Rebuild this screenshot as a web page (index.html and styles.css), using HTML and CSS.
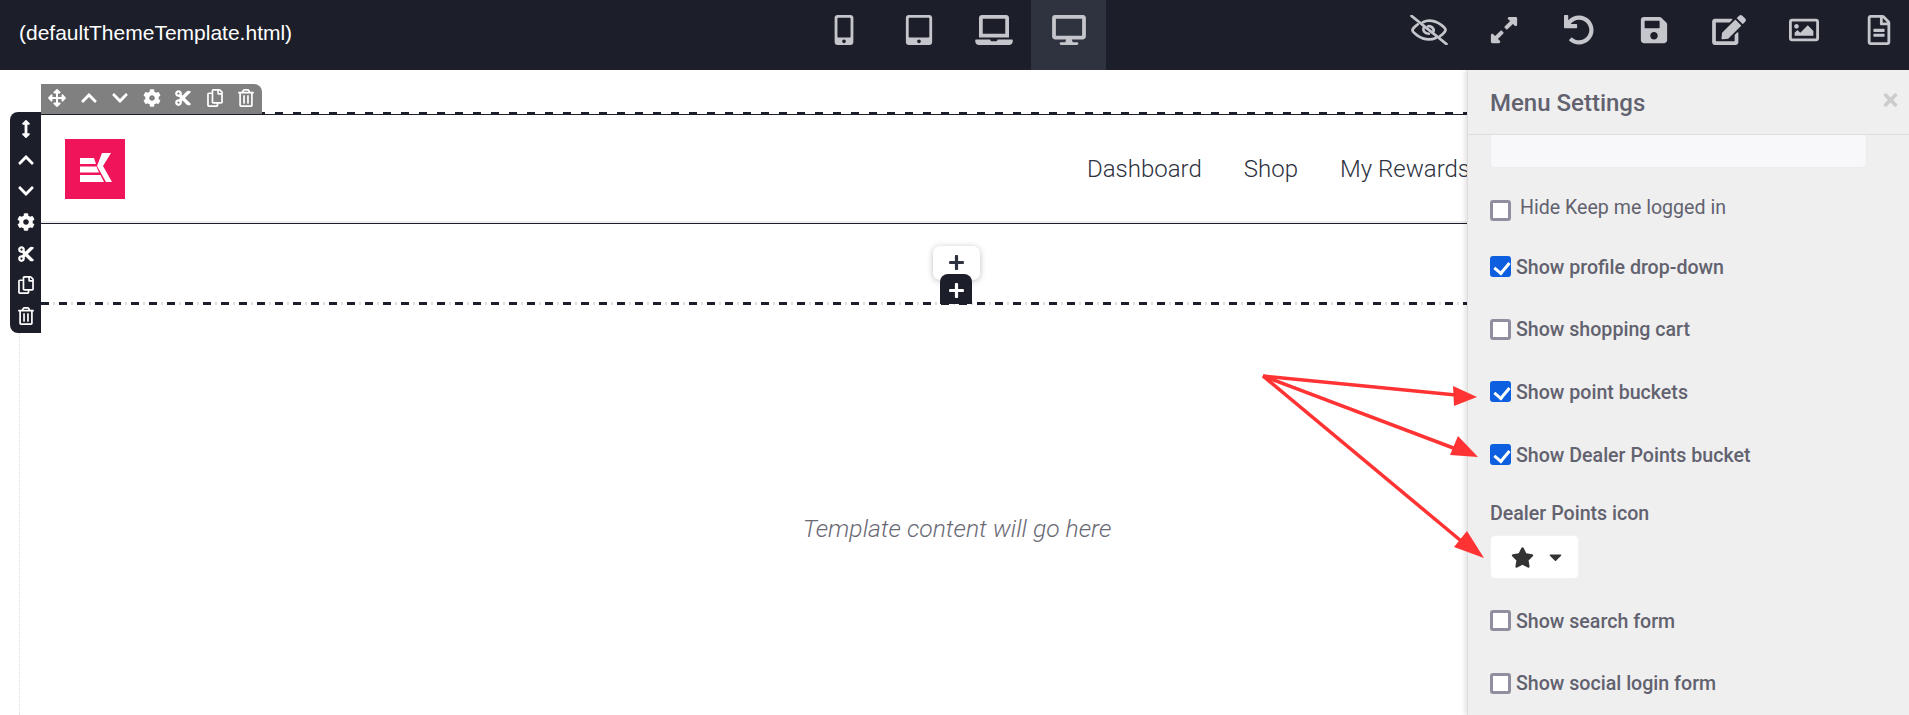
FILE: index.html
```html
<!DOCTYPE html>
<html lang="en">
<head>
    <meta charset="UTF-8">
    <title>Template Editor</title>
    <link rel="stylesheet" href="styles.css">
</head>
<body>
    <!-- Icon sprite -->
    <svg class="sprite" xmlns="http://www.w3.org/2000/svg">
        <symbol id="i-mobile" viewBox="0 0 320 512"><path d="M272 0H48C21.5 0 0 21.5 0 48v416c0 26.5 21.5 48 48 48h224c26.5 0 48-21.5 48-48V48c0-26.5-21.5-48-48-48zM160 480c-17.7 0-32-14.3-32-32s14.3-32 32-32 32 14.3 32 32-14.3 32-32 32zm112-108c0 6.6-5.4 12-12 12H60c-6.6 0-12-5.4-12-12V60c0-6.6 5.4-12 12-12h200c6.6 0 12 5.4 12 12v312z"/></symbol>
        <symbol id="i-tablet" viewBox="0 0 448 512"><path d="M400 0H48C21.5 0 0 21.5 0 48v416c0 26.5 21.5 48 48 48h352c26.5 0 48-21.5 48-48V48c0-26.5-21.5-48-48-48zM224 480c-17.7 0-32-14.3-32-32s14.3-32 32-32 32 14.3 32 32-14.3 32-32 32zm176-108c0 6.6-5.4 12-12 12H60c-6.6 0-12-5.4-12-12V60c0-6.6 5.4-12 12-12h328c6.6 0 12 5.4 12 12v312z"/></symbol>
        <symbol id="i-laptop" viewBox="0 0 640 512"><path d="M624 416H381.54c-.74 19.81-14.71 32-32.74 32H288c-18.69 0-33.02-17.47-32.77-32H16c-8.8 0-16 7.2-16 16v16c0 35.2 28.8 64 64 64h512c35.2 0 64-28.8 64-64v-16c0-8.8-7.2-16-16-16zM576 48c0-26.4-21.6-48-48-48H112C85.6 0 64 21.6 64 48v336h512V48zm-64 272H128V64h384v256z"/></symbol>
        <symbol id="i-desktop" viewBox="0 0 576 512"><path d="M528 0H48C21.5 0 0 21.5 0 48v320c0 26.5 21.5 48 48 48h192l-16 48h-72c-13.3 0-24 10.7-24 24s10.7 24 24 24h272c13.3 0 24-10.7 24-24s-10.7-24-24-24h-72l-16-48h192c26.5 0 48-21.5 48-48V48c0-26.5-21.5-48-48-48zm-16 352H64V64h448v288z"/></symbol>
        <symbol id="i-eye-off" viewBox="0 0 640 512"><g fill="none" stroke="currentColor" stroke-width="46" stroke-linecap="round"><path d="M128 160C60 205 38 250 38 256c0 30 120 160 282 160 45 0 82-9 115-24"/><path d="M215 122c32-14 67-26 105-26 162 0 282 130 282 160 0 8-26 58-94 104"/><path d="M228 220c-14 38 4 92 92 100"/><path d="M306 192c50-8 100 30 92 86"/><path d="M22 16l596 480"/></g></symbol>
        <symbol id="i-expand" viewBox="0 0 448 512"><path d="M212.686 315.314L120 408l32.922 31.029c15.12 15.12 4.412 40.971-16.97 40.971h-112C10.697 480 0 469.255 0 456V344c0-21.382 25.803-32.09 40.922-16.971L72 360l92.686-92.686c6.249-6.248 16.379-6.248 22.627 0l25.373 25.373c6.249 6.248 6.249 16.378 0 22.627zm22.628-118.628L328 104l-32.922-31.029C279.958 57.851 290.666 32 312.048 32h112C437.303 32 448 42.745 448 56v112c0 21.382-25.803 32.09-40.922 16.971L376 152l-92.686 92.686c-6.248 6.248-16.379 6.248-22.627 0l-25.373-25.373c-6.249-6.248-6.249-16.378 0-22.627z"/></symbol>
        <symbol id="i-undo" viewBox="0 0 512 512"><path d="M212.333 224.333H12c-6.627 0-12-5.373-12-12V12C0 5.373 5.373 0 12 0h48c6.627 0 12 5.373 12 12v78.112C117.773 39.279 184.26 7.47 258.175 8.007c136.906.994 246.448 111.623 246.157 248.532C504.041 393.258 393.12 504 256.333 504c-64.089 0-122.496-24.313-166.51-64.215-5.099-4.622-5.334-12.554-.467-17.42l33.967-33.967c4.474-4.474 11.662-4.717 16.401-.525C170.76 415.336 211.58 432 256.333 432c97.268 0 176-78.716 176-176 0-97.267-78.716-176-176-176-58.496 0-110.28 28.476-142.274 72.333h98.274c6.627 0 12 5.373 12 12v48c0 6.627-5.373 12-12 12z"/></symbol>
        <symbol id="i-save" viewBox="0 0 448 512"><path d="M433.941 129.941l-83.882-83.882A48 48 0 0 0 316.118 32H48C21.49 32 0 53.49 0 80v352c0 26.51 21.49 48 48 48h352c26.51 0 48-21.49 48-48V163.882a48 48 0 0 0-14.059-33.941zM224 416c-35.346 0-64-28.654-64-64 0-35.346 28.654-64 64-64s64 28.654 64 64c0 35.346-28.654 64-64 64zm96-304.52V212c0 6.627-5.373 12-12 12H76c-6.627 0-12-5.373-12-12V108c0-6.627 5.373-12 12-12h228.52c3.183 0 6.235 1.264 8.485 3.515l3.48 3.48A11.996 11.996 0 0 1 320 111.48z"/></symbol>
        <symbol id="i-edit" viewBox="0 0 576 512"><path d="M402.6 83.2l90.2 90.2c3.8 3.8 3.8 10 0 13.8L274.4 405.6l-92.8 10.3c-12.4 1.4-22.9-9.1-21.5-21.5l10.3-92.8L388.8 83.2c3.8-3.8 10-3.8 13.8 0zm162-22.9l-48.8-48.8c-15.2-15.2-39.9-15.2-55.2 0l-35.4 35.4c-3.8 3.8-3.8 10 0 13.8l90.2 90.2c3.8 3.8 10 3.8 13.8 0l35.4-35.4c15.2-15.3 15.2-40 0-55.2zM384 346.2V448H64V128h229.8c3.2 0 6.2-1.3 8.5-3.5l40-40c7.6-7.6 2.2-20.5-8.5-20.5H48C21.5 64 0 85.5 0 112v352c0 26.5 21.5 48 48 48h352c26.5 0 48-21.5 48-48V306.2c0-10.7-12.9-16-20.5-8.5l-40 40c-2.2 2.3-3.5 5.3-3.5 8.5z"/></symbol>
        <symbol id="i-image" viewBox="0 0 512 512"><path d="M464 64H48C21.49 64 0 85.49 0 112v288c0 26.51 21.49 48 48 48h416c26.51 0 48-21.49 48-48V112c0-26.51-21.49-48-48-48zm-6 336H54a6 6 0 0 1-6-6V118a6 6 0 0 1 6-6h404a6 6 0 0 1 6 6v276a6 6 0 0 1-6 6zM128 152c-22.091 0-40 17.909-40 40s17.909 40 40 40 40-17.909 40-40-17.909-40-40-40zM96 352h320v-80l-87.515-87.515c-4.686-4.686-12.284-4.686-16.971 0L192 304l-39.515-39.515c-4.686-4.686-12.284-4.686-16.971 0L96 304v48z"/></symbol>
        <symbol id="i-file" viewBox="0 0 384 512"><path d="M288 248v28c0 6.6-5.4 12-12 12H108c-6.6 0-12-5.4-12-12v-28c0-6.6 5.4-12 12-12h168c6.6 0 12 5.4 12 12zm-12 72H108c-6.6 0-12 5.4-12 12v28c0 6.6 5.4 12 12 12h168c6.6 0 12-5.4 12-12v-28c0-6.6-5.4-12-12-12zm108-188.1V464c0 26.5-21.5 48-48 48H48c-26.5 0-48-21.5-48-48V48C0 21.5 21.5 0 48 0h204.1C264.8 0 277 5.1 286 14.1L369.9 98c9 8.9 14.1 21.2 14.1 33.9zm-128-80V128h76.1L256 51.9zM336 464V176H232c-13.3 0-24-10.7-24-24V48H48v416h288z"/></symbol>
        <symbol id="i-move" viewBox="0 0 512 512"><path d="M352.201 425.775l-79.196 79.196c-9.373 9.373-24.568 9.373-33.941 0l-79.196-79.196c-15.119-15.119-4.411-40.971 16.971-40.97h51.162L228 284H127.196v51.162c0 21.382-25.851 32.09-40.971 16.971L7.029 272.937c-9.373-9.373-9.373-24.569 0-33.941L86.225 159.8c15.119-15.119 40.971-4.411 40.971 16.971V228H228V127.196h-51.23c-21.382 0-32.09-25.851-16.971-40.971l79.196-79.196c9.373-9.373 24.568-9.373 33.941 0l79.196 79.196c15.119 15.119 4.411 40.971-16.971 40.971h-51.162V228h100.804v-51.162c0-21.382 25.851-32.09 40.97-16.971l79.196 79.196c9.373 9.373 9.373 24.569 0 33.941L425.773 352.2c-15.119 15.119-40.971 4.411-40.97-16.971V284H284v100.804h51.23c21.382 0 32.09 25.851 16.971 40.971z"/></symbol>
        <symbol id="i-up" viewBox="0 0 448 512"><path d="M240.971 130.524l194.343 194.343c9.373 9.373 9.373 24.569 0 33.941l-22.667 22.667c-9.357 9.357-24.522 9.375-33.901.04L224 227.495 69.255 381.516c-9.379 9.335-24.544 9.317-33.901-.04l-22.667-22.667c-9.373-9.373-9.373-24.569 0-33.941L207.03 130.525c9.372-9.373 24.568-9.373 33.941-.001z"/></symbol>
        <symbol id="i-down" viewBox="0 0 448 512"><path d="M207.029 381.476L12.686 187.132c-9.373-9.373-9.373-24.569 0-33.941l22.667-22.667c9.357-9.357 24.522-9.375 33.901-.04L224 284.505l154.745-154.021c9.379-9.335 24.544-9.317 33.901.04l22.667 22.667c9.373 9.373 9.373 24.569 0 33.941L240.971 381.476c-9.373 9.372-24.569 9.372-33.942 0z"/></symbol>
        <symbol id="i-cog" viewBox="0 0 512 512"><path d="M487.4 315.7l-42.6-24.6c4.3-23.2 4.3-47 0-70.2l42.6-24.6c4.9-2.8 7.1-8.6 5.5-14-11.1-35.6-30-67.8-54.7-94.6-3.8-4.1-10-5.1-14.8-2.3L380.8 110c-17.9-15.4-38.5-27.3-60.8-35.1V25.8c0-5.6-3.9-10.5-9.4-11.7-36.7-8.2-74.3-7.8-109.2 0-5.5 1.2-9.4 6.1-9.4 11.7V75c-22.2 7.9-42.8 19.8-60.8 35.1L88.7 85.5c-4.9-2.8-11-1.9-14.8 2.3-24.7 26.7-43.6 58.9-54.7 94.6-1.7 5.4.6 11.2 5.5 14L67.3 221c-4.3 23.2-4.3 47 0 70.2l-42.6 24.6c-4.9 2.8-7.1 8.6-5.5 14 11.1 35.6 30 67.8 54.7 94.6 3.8 4.1 10 5.1 14.8 2.3l42.6-24.6c17.9 15.4 38.5 27.3 60.8 35.1v49.2c0 5.6 3.9 10.5 9.4 11.7 36.7 8.2 74.3 7.8 109.2 0 5.5-1.2 9.4-6.1 9.4-11.7v-49.2c22.2-7.9 42.8-19.8 60.8-35.1l42.6 24.6c4.9 2.8 11 1.9 14.8-2.3 24.7-26.7 43.6-58.9 54.7-94.6 1.5-5.5-.7-11.3-5.6-14.1zM256 336c-44.1 0-80-35.9-80-80s35.9-80 80-80 80 35.9 80 80-35.9 80-80 80z"/></symbol>
        <symbol id="i-cut" viewBox="0 0 448 512"><path d="M278.06 256L444.48 89.57c4.69-4.69 4.69-12.29 0-16.97-32.8-32.8-85.99-32.8-118.79 0L210.18 188.12l-24.86-24.86c4.31-10.92 6.68-22.81 6.68-35.26 0-53.02-42.98-96-96-96S0 74.98 0 128s42.98 96 96 96c4.54 0 8.99-.32 13.36-.93L142.29 256l-32.93 32.93c-4.37-.61-8.83-.93-13.36-.93-53.02 0-96 42.98-96 96s42.98 96 96 96 96-42.98 96-96c0-12.45-2.37-24.34-6.68-35.26l24.86-24.86L325.69 439.4c32.8 32.8 85.99 32.8 118.79 0 4.69-4.68 4.69-12.28 0-16.97L278.06 256zM96 160c-17.64 0-32-14.36-32-32s14.36-32 32-32 32 14.36 32 32-14.36 32-32 32zm0 256c-17.64 0-32-14.36-32-32s14.36-32 32-32 32 14.36 32 32-14.36 32-32 32z"/></symbol>
        <symbol id="i-copy" viewBox="0 0 448 512"><path d="M433.941 65.941l-51.882-51.882A48 48 0 0 0 348.118 0H176c-26.51 0-48 21.49-48 48v48H48c-26.51 0-48 21.49-48 48v320c0 26.51 21.49 48 48 48h224c26.51 0 48-21.49 48-48v-48h80c26.51 0 48-21.49 48-48V99.882a48 48 0 0 0-14.059-33.941zM266 464H54a6 6 0 0 1-6-6V150a6 6 0 0 1 6-6h74v224c0 26.51 21.49 48 48 48h96v42a6 6 0 0 1-6 6zm128-96H182a6 6 0 0 1-6-6V54a6 6 0 0 1 6-6h106v88c0 13.255 10.745 24 24 24h88v202a6 6 0 0 1-6 6zm6-256h-64V48h9.632c1.591 0 3.117.632 4.243 1.757l48.368 48.368a6 6 0 0 1 1.757 4.243V112z"/></symbol>
        <symbol id="i-trash" viewBox="0 0 448 512"><path d="M268 416h24a12 12 0 0 0 12-12V188a12 12 0 0 0-12-12h-24a12 12 0 0 0-12 12v216a12 12 0 0 0 12 12zM432 80h-82.41l-34-56.7A48 48 0 0 0 274.41 0H173.59a48 48 0 0 0-41.16 23.3L98.41 80H16A16 16 0 0 0 0 96v16a16 16 0 0 0 16 16h16v336a48 48 0 0 0 48 48h288a48 48 0 0 0 48-48V128h16a16 16 0 0 0 16-16V96a16 16 0 0 0-16-16zM171.84 50.91A6 6 0 0 1 177 48h94a6 6 0 0 1 5.15 2.91L293.61 80H154.39zM368 464H80V128h288zm-212-48h24a12 12 0 0 0 12-12V188a12 12 0 0 0-12-12h-24a12 12 0 0 0-12 12v216a12 12 0 0 0 12 12z"/></symbol>
        <symbol id="i-resize" viewBox="0 0 256 512"><path d="M214.059 377.941H168V134.059h46.059c21.382 0 32.09-25.851 16.971-40.971L144.971 7.029c-9.373-9.373-24.569-9.373-33.941 0L24.971 93.088c-15.119 15.119-4.411 40.971 16.971 40.971H88v243.882H41.941c-21.382 0-32.09 25.851-16.971 40.971l86.059 86.059c9.373 9.373 24.569 9.373 33.941 0l86.059-86.059c15.12-15.119 4.412-40.971-16.97-40.971z"/></symbol>
        <symbol id="i-plus" viewBox="0 0 448 512"><path d="M416 208H272V64c0-17.67-14.33-32-32-32h-32c-17.67 0-32 14.33-32 32v144H32c-17.67 0-32 14.33-32 32v32c0 17.67 14.33 32 32 32h144v144c0 17.67 14.33 32 32 32h32c17.67 0 32-14.33 32-32V304h144c17.67 0 32-14.33 32-32v-32c0-17.67-14.33-32-32-32z"/></symbol>
        <symbol id="i-star" viewBox="0 0 576 512"><path d="M259.3 17.8L194 150.2 47.9 171.5c-26.2 3.8-36.7 36.1-17.7 54.6l105.7 103-25 145.5c-4.5 26.3 23.2 46 46.4 33.7L288 439.6l130.7 68.7c23.2 12.2 50.9-7.4 46.4-33.7l-25-145.5 105.7-103c19-18.5 8.5-50.8-17.7-54.6L382 150.2 316.7 17.8c-11.7-23.6-45.6-23.9-57.4 0z"/></symbol>
        <symbol id="i-caret" viewBox="0 0 320 512"><path d="M31.3 192h257.3c17.8 0 26.7 21.5 14.1 34.1L174.1 354.8c-7.8 7.8-20.5 7.8-28.3 0L17.2 226.1C4.6 213.5 13.5 192 31.3 192z"/></symbol>
        <symbol id="i-times" viewBox="0 0 352 512"><path d="M242.72 256l100.07-100.07c12.28-12.28 12.28-32.19 0-44.48l-22.24-22.24c-12.28-12.28-32.19-12.28-44.48 0L176 189.28 75.93 89.21c-12.28-12.28-32.19-12.28-44.48 0L9.21 111.45c-12.28 12.28-12.28 32.19 0 44.48L109.28 256 9.21 356.07c-12.28 12.28-12.28 32.19 0 44.48l22.24 22.24c12.28 12.28 32.2 12.28 44.48 0L176 322.72l100.07 100.07c12.28 12.28 32.2 12.28 44.48 0l22.24-22.24c12.28-12.28 12.28-32.19 0-44.48L242.72 256z"/></symbol>
    </svg>

    <header class="topbar">
        <div class="file-name">(defaultThemeTemplate.html)</div>
        <div class="devices">
            <button class="top-btn"><svg class="top-icon"><use href="#i-mobile"/></svg></button>
            <button class="top-btn"><svg class="top-icon"><use href="#i-tablet"/></svg></button>
            <button class="top-btn"><svg class="top-icon"><use href="#i-laptop"/></svg></button>
            <button class="top-btn active"><svg class="top-icon"><use href="#i-desktop"/></svg></button>
        </div>
        <div class="actions">
            <button class="top-btn"><svg class="top-icon"><use href="#i-eye-off"/></svg></button>
            <button class="top-btn"><svg class="top-icon"><use href="#i-expand"/></svg></button>
            <button class="top-btn"><svg class="top-icon"><use href="#i-undo"/></svg></button>
            <button class="top-btn"><svg class="top-icon"><use href="#i-save"/></svg></button>
            <button class="top-btn"><svg class="top-icon"><use href="#i-edit"/></svg></button>
            <button class="top-btn"><svg class="top-icon"><use href="#i-image"/></svg></button>
            <button class="top-btn"><svg class="top-icon"><use href="#i-file"/></svg></button>
        </div>
    </header>

    <div class="workspace">
        <main class="canvas">
            <div class="guide"></div>

            <section class="block">
                <!-- Row toolbar -->
                <div class="tools tools-top">
                    <svg class="tool-icon"><use href="#i-move"/></svg>
                    <svg class="tool-icon"><use href="#i-up"/></svg>
                    <svg class="tool-icon"><use href="#i-down"/></svg>
                    <svg class="tool-icon"><use href="#i-cog"/></svg>
                    <svg class="tool-icon"><use href="#i-cut"/></svg>
                    <svg class="tool-icon"><use href="#i-copy"/></svg>
                    <svg class="tool-icon"><use href="#i-trash"/></svg>
                </div>
                <!-- Section toolbar -->
                <div class="tools tools-side">
                    <svg class="tool-icon"><use href="#i-resize"/></svg>
                    <svg class="tool-icon"><use href="#i-up"/></svg>
                    <svg class="tool-icon"><use href="#i-down"/></svg>
                    <svg class="tool-icon"><use href="#i-cog"/></svg>
                    <svg class="tool-icon"><use href="#i-cut"/></svg>
                    <svg class="tool-icon"><use href="#i-copy"/></svg>
                    <svg class="tool-icon"><use href="#i-trash"/></svg>
                </div>

                <div class="dash"></div>
                <div class="site-header">
                    <div class="logo">
                        <svg viewBox="0 0 60 60" class="logo-mark">
                            <path d="M15 19H29L31 25H15zM15 27.5H31.5L34 33.5H15zM15 36H35.500L39 43H15z"/>
                            <path d="M37 14H46L38 27L47 43H41L32 27z"/>
                        </svg>
                    </div>
                    <nav class="site-nav">
                        <a>Dashboard</a>
                        <a>Shop</a>
                        <a>My Rewards</a>
                    </nav>
                </div>
                <div class="add-area">
                    <button class="add-row"><svg class="add-icon"><use href="#i-plus"/></svg></button>
                    <button class="add-section"><svg class="add-icon"><use href="#i-plus"/></svg></button>
                </div>
                <div class="dash dash-dotted"></div>
            </section>

            <p class="placeholder">Template content will go here</p>
        </main>

        <aside class="panel">
            <div class="panel-head">
                <h2>Menu Settings</h2>
                <svg class="panel-close"><use href="#i-times"/></svg>
            </div>
            <div class="panel-body">
                <div class="field-stub"></div>

                <label class="check plain"><input type="checkbox"><span>Hide Keep me logged in</span></label>
                <label class="check"><input type="checkbox" checked><span>Show profile drop-down</span></label>
                <label class="check"><input type="checkbox"><span>Show shopping cart</span></label>
                <label class="check"><input type="checkbox" checked><span>Show point buckets</span></label>
                <label class="check"><input type="checkbox" checked><span>Show Dealer Points bucket</span></label>

                <div class="field-label">Dealer Points icon</div>
                <button class="icon-picker">
                    <svg class="star"><use href="#i-star"/></svg>
                    <svg class="caret"><use href="#i-caret"/></svg>
                </button>

                <label class="check"><input type="checkbox"><span>Show search form</span></label>
                <label class="check"><input type="checkbox"><span>Show social login form</span></label>
            </div>
        </aside>

        <!-- Annotation arrows -->
        <svg class="arrows" viewBox="0 0 1909 645">
            <g stroke="#ff3333" stroke-width="3.5" fill="none">
                <path d="M1263 306L1456 325"/>
                <path d="M1263 306L1456 379"/>
                <path d="M1263 306L1466 475"/>
            </g>
            <g fill="#ff3333">
                <path d="M1477 327L1453 316L1454 336z"/>
                <path d="M1478 387L1458 366L1450 385z"/>
                <path d="M1484 488L1467 461L1454 477z"/>
            </g>
        </svg>
    </div>
</body>
</html>
```

FILE: styles.css
```css
* {
    box-sizing: border-box;
}

html, body {
    margin: 0;
    height: 100%;
}

body {
    display: flex;
    flex-direction: column;
    overflow: hidden;
    background-color: #fff;
    font-family: Roboto, "Liberation Sans", sans-serif;
}

.sprite {
    display: none;
}

button {
    border: none;
    padding: 0;
    background: none;
    font: inherit;
}

/* Top bar */
.topbar {
    display: flex;
    flex: none;
    align-items: stretch;
    height: 70px;
    background-color: #1c1f2a;
    color: #c5c6cc;
}

.file-name {
    flex: none;
    width: 806px;
    padding-left: 19px;
    color: #fff;
    font-family: "Liberation Sans", Arial, sans-serif;
    font-size: 21px;
    line-height: 66px;
}

.devices,
.actions {
    display: flex;
    flex: none;
}

.actions {
    margin-left: 285px;
}

.top-btn {
    display: flex;
    flex: none;
    align-items: center;
    justify-content: center;
    width: 75px;
    height: 70px;
    padding-bottom: 11px;
    color: inherit;
}

.top-btn.active {
    background-color: #2f323f;
}

.top-icon {
    width: 38px;
    height: 30px;
    fill: currentColor;
}

/* Canvas */
.workspace {
    position: relative;
    flex: 1;
    overflow: hidden;
}

.canvas {
    padding: 42px 36px 0 41px;
}

.guide {
    position: absolute;
    top: 263px;
    bottom: 0;
    left: 19px;
    border-left: 1px dotted #ddd;
}

.block {
    position: relative;
}

.dash {
    height: 3px;
    background: repeating-linear-gradient(90deg, #1c1f2a 0, #1c1f2a 8px, transparent 8px, transparent 18px);
}

.dash-dotted {
    background: repeating-linear-gradient(90deg, #1c1f2a 0, #1c1f2a 8px, transparent 8px, transparent 12px, #ddd 12px, #ddd 14px, transparent 14px, transparent 18px);
}

.tools {
    position: absolute;
    display: flex;
    color: #fff;
    fill: currentColor;
}

.tools-top {
    top: -28px;
    left: 0;
    align-items: center;
    justify-content: space-between;
    width: 221px;
    height: 30px;
    padding: 0 7px 2px;
    background-color: #808080;
    border-top-right-radius: 8px;
}

.tools-side {
    top: 0;
    left: -31px;
    flex-direction: column;
    align-items: center;
    justify-content: space-between;
    width: 31px;
    height: 221px;
    padding: 8px 0;
    background-color: #1c1f2a;
    border-radius: 8px 0 0 8px;
}

.tool-icon {
    width: 18px;
    height: 18px;
}

.site-header {
    display: flex;
    align-items: center;
    height: 110px;
    margin-top: -1px;
    padding-left: 24px;
    border-top: 1px solid #1c1f2a;
    border-bottom: 1px solid #1c1f2a;
    box-shadow: inset 0 -2px 0 #eee;
}

.logo {
    flex: none;
    width: 60px;
    height: 60px;
    background-color: #f0145a;
}

.logo-mark {
    display: block;
    fill: #fff;
}

.site-nav {
    display: flex;
    flex: none;
    gap: 42px;
    margin-left: 962px;
    color: #2e3140;
    font-size: 24px;
    font-weight: 300;
    white-space: nowrap;
}

.add-area {
    position: relative;
    height: 78px;
}

.add-row,
.add-section {
    position: absolute;
    display: flex;
    align-items: center;
    justify-content: center;
    left: 50%;
}

.add-row {
    top: 22px;
    width: 47px;
    height: 34px;
    margin-left: -24px;
    padding-bottom: 2px;
    background-color: #fff;
    border-radius: 7px;
    box-shadow: 0 1px 6px rgba(0, 0, 0, 0.25);
    fill: #2e3140;
}

.add-section {
    top: 50px;
    width: 32px;
    height: 30px;
    margin-left: -17px;
    padding-top: 2px;
    background-color: #1c1f2a;
    border-radius: 8px 8px 0 0;
    fill: #fff;
}

.add-icon {
    width: 17px;
    height: 17px;
}

.placeholder {
    margin: 210px 0 0;
    color: #6a6a75;
    font-size: 24.7px;
    font-style: italic;
    font-weight: 300;
    line-height: 28px;
    text-align: center;
}

/* Settings panel */
.panel {
    position: absolute;
    top: 0;
    right: 0;
    bottom: 0;
    width: 442px;
    background-color: #efefef;
    border-left: 1px solid #ddd;
    box-shadow: -2px 0 5px rgba(0, 0, 0, 0.12);
    color: #62626f;
}

.panel-head {
    position: relative;
    height: 65px;
    padding-left: 22px;
    border-bottom: 1px solid #ddd;
}

.panel-head h2 {
    margin: 0;
    font-size: 24px;
    font-weight: 500;
    line-height: 66px;
}

.panel-close {
    position: absolute;
    top: 20px;
    right: 11px;
    width: 15px;
    height: 20px;
    fill: #ccc;
}

.panel-body {
    padding-left: 22px;
}

.field-stub {
    width: 377px;
    height: 33px;
    margin-bottom: 32px;
    background-color: #f8f8fa;
    border: 1px solid #ececf0;
    border-top: none;
    border-radius: 0 0 5px 5px;
}

.check {
    display: flex;
    align-items: center;
    height: 21px;
    margin-bottom: 41.7px;
    font-size: 19.6px;
    font-weight: 500;
    line-height: 21px;
}

.check span {
    padding-top: 1px;
}

.check input {
    position: relative;
    flex: none;
    width: 21px;
    height: 21px;
    margin: 0 5px 0 0;
    appearance: none;
    background-color: #fff;
    border: 3px solid #8f8fa0;
    border-radius: 3px;
}

.check input:checked {
    background-color: #0d5fe0;
    border-color: #0d5fe0;
}

.check input:checked::after {
    content: "";
    position: absolute;
    top: 0;
    left: 4px;
    width: 7px;
    height: 12px;
    border: solid #fff;
    border-width: 0 3px 3px 0;
    transform: rotate(40deg);
}

.check.plain {
    margin-bottom: 35px;
    font-weight: 400;
}

.check.plain input {
    margin-right: 9px;
}

.check.plain span {
    margin-top: -6px;
    padding-top: 0;
}

.field-label {
    margin-top: -4px;
    font-size: 19.6px;
    font-weight: 500;
    line-height: 21px;
}

.icon-picker {
    display: flex;
    align-items: center;
    width: 89px;
    height: 44px;
    margin: 11.5px 0 31px;
    padding-left: 20px;
    background-color: #fff;
    border: 1px solid #f2f2f4;
    border-radius: 5px;
    fill: #333;
}

.star {
    width: 23px;
    height: 21px;
}

.caret {
    width: 13px;
    height: 20px;
    margin-left: 15px;
}

/* Annotations */
.arrows {
    position: absolute;
    top: 0;
    left: 0;
    width: 1909px;
    height: 645px;
    pointer-events: none;
}
```
